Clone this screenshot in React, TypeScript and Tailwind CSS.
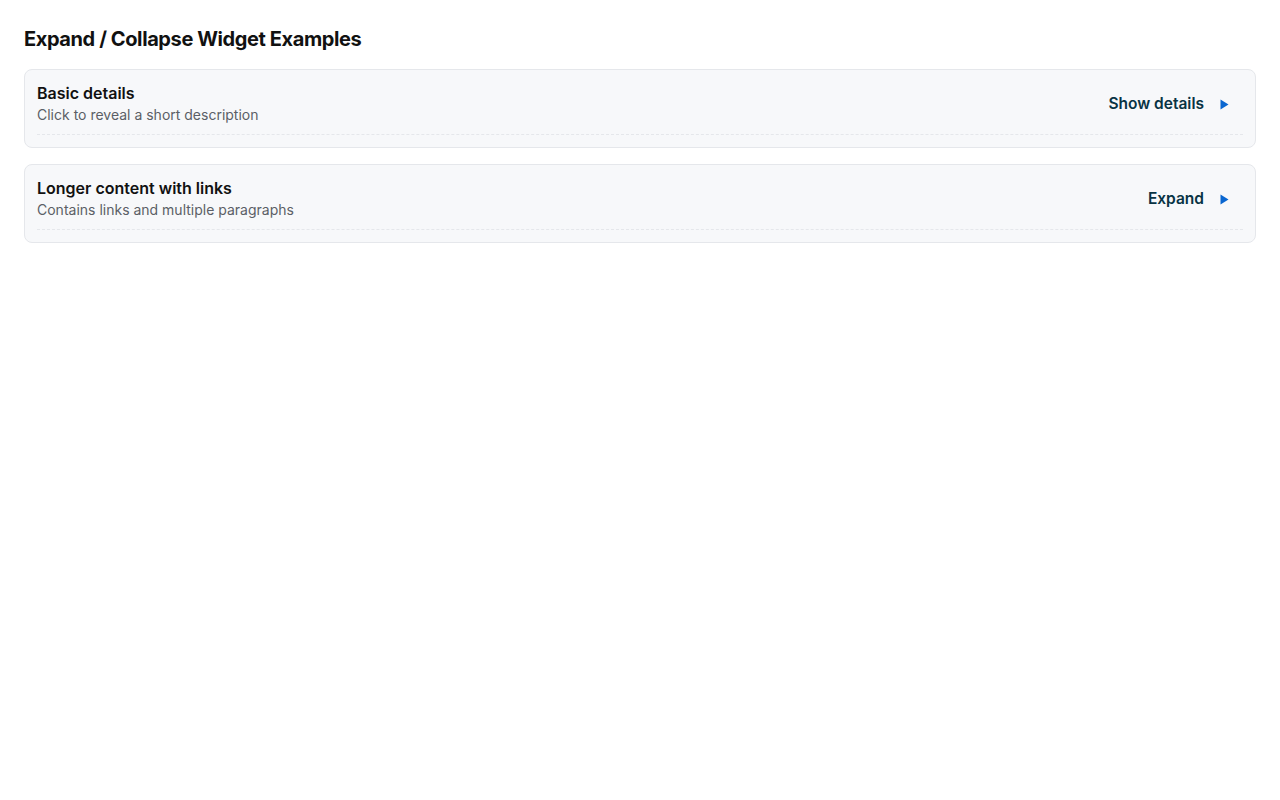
import React from "react";

function Card({ title, subtitle, action }: { title: string; subtitle: string; action: string }) {
  return (
    <div className="rounded-lg border border-[#e5e7eb] bg-[#f7f8fa] px-3 pt-3 pb-3">
      <div className="flex items-center justify-between border-b border-dashed border-[#e5e7eb] pb-[9px]">
        <div className="flex flex-col">
          <div className="text-[16px] leading-[22px] font-semibold text-[#111111]">{title}</div>
          <div className="mt-px text-[14px] leading-[20px] text-[#5b5f66]">{subtitle}</div>
        </div>
        <button className="flex items-center gap-4 pr-3.5 pt-px text-[15.5px] font-semibold text-[#083344]">
          <span>{action}</span>
          <svg width="9" height="11" viewBox="0 0 9 11" className="block">
            <path d="M0.5 0.5 L8.5 5.5 L0.5 10.5 Z" fill="#0a66d0" />
          </svg>
        </button>
      </div>
    </div>
  );
}

export default function App() {
  return (
    <div className="min-h-screen bg-white px-6 pt-6" style={{ fontFamily: "Inter, 'Noto Sans', sans-serif" }}>
      <h1 className="text-[20px] leading-[30px] font-bold tracking-[-0.02em] text-[#111111] mb-[15px]">Expand / Collapse Widget Examples</h1>
      <div className="flex flex-col gap-4">
        <Card title="Basic details" subtitle="Click to reveal a short description" action="Show details" />
        <Card title="Longer content with links" subtitle="Contains links and multiple paragraphs" action="Expand" />
      </div>
    </div>
  );
}
